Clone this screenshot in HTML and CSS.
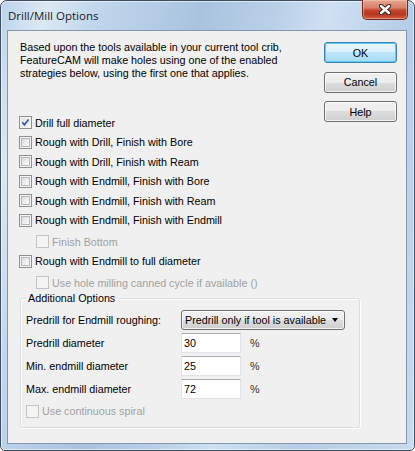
FILE: index.html
```html
<!DOCTYPE html>
<html lang="en">
<head>
    <meta charset="UTF-8">
    <title>Drill/Mill Options</title>
    <link rel="stylesheet" href="styles.css">
</head>
<body>
    <div class="window">
        <div class="titlebar">
            <span class="title">Drill/Mill Options</span>
            <button class="close-btn" title="Close">
                <svg width="12" height="11" viewBox="0 0 12 11">
                    <path d="M2 2 L10 9 M10 2 L2 9" stroke="#3a2a28" stroke-width="4.4" stroke-linecap="round"/>
                    <path d="M2 2 L10 9 M10 2 L2 9" stroke="#ffffff" stroke-width="2.4" stroke-linecap="round"/>
                </svg>
            </button>
        </div>

        <div class="client">
            <div class="main">
                <p class="intro">
                    Based upon the tools available in your current tool crib,<br>
                    FeatureCAM will make holes using one of the enabled<br>
                    strategies below, using the first one that applies.
                </p>

                <div class="options">
                    <label class="row">
                        <span class="cb checked">
                            <svg width="9" height="9" viewBox="0 0 9 9">
                                <path d="M1.3 4.2 L3.4 6.8 L7.6 1.4" fill="none" stroke="#3f5a9c" stroke-width="1.7"/>
                            </svg>
                        </span>
                        Drill full diameter
                    </label>
                    <label class="row"><span class="cb"></span>Rough with Drill, Finish with Bore</label>
                    <label class="row"><span class="cb"></span>Rough with Drill, Finish with Ream</label>
                    <label class="row"><span class="cb"></span>Rough with Endmill, Finish with Bore</label>
                    <label class="row"><span class="cb"></span>Rough with Endmill, Finish with Ream</label>
                    <label class="row"><span class="cb"></span>Rough with Endmill, Finish with Endmill</label>
                    <label class="row sub disabled"><span class="cb"></span>Finish Bottom</label>
                    <label class="row"><span class="cb"></span>Rough with Endmill to full diameter</label>
                    <label class="row sub disabled"><span class="cb"></span>Use hole milling canned cycle if available ()</label>
                </div>

                <fieldset class="group">
                    <legend>Additional Options</legend>

                    <div class="field">
                        <span class="field-label">Predrill for Endmill roughing:</span>
                        <div class="select">
                            <span>Predrill only if tool is available</span>
                            <span class="arrow"></span>
                        </div>
                    </div>
                    <div class="field">
                        <span class="field-label">Predrill diameter</span>
                        <input class="num" type="text" value="30">
                        <span class="unit">%</span>
                    </div>
                    <div class="field">
                        <span class="field-label">Min. endmill diameter</span>
                        <input class="num" type="text" value="25">
                        <span class="unit">%</span>
                    </div>
                    <div class="field">
                        <span class="field-label">Max. endmill diameter</span>
                        <input class="num" type="text" value="72">
                        <span class="unit">%</span>
                    </div>

                    <label class="row spiral disabled"><span class="cb"></span>Use continuous spiral</label>
                </fieldset>
            </div>

            <div class="buttons">
                <button class="btn default">OK</button>
                <button class="btn">Cancel</button>
                <button class="btn">Help</button>
            </div>
        </div>
    </div>
</body>
</html>
```

FILE: styles.css
```css
/* Page */
body {
    margin: 0;
    background: #ffffff;
}

/* Window frame (Aero glass look) */
.window {
    width: 415px;
    height: 451px;
    box-sizing: border-box;
    border: 1px solid #3f4e5f;
    border-radius: 7px 7px 5px 5px;
    padding: 0 7px 6px 6px;
    display: flex;
    flex-direction: column;
    background: linear-gradient(105deg, #bcd3eb 0%, #dbe8f5 9%, #c2d7ed 18%, #a9c3df 38%, #b9d0e8 52%, #cfe0f2 62%, #b6cde6 78%, #c8dbef 100%);
    box-shadow: inset 0 0 0 1px rgba(255, 255, 255, 0.55);
}

/* Title bar */
.titlebar {
    height: 29px;
    display: flex;
    align-items: flex-start;
    padding-left: 1px;
}

.title {
    font-family: "Open Sans", "Noto Sans", sans-serif;
    font-size: 11.5px;
    color: #1a1a1a;
    margin-top: 7px;
}

.close-btn {
    margin: -1px -1px 0 auto;
    width: 46px;
    height: 20px;
    padding: 0;
    border: 1px solid #6e2a22;
    border-top: none;
    border-radius: 0 0 5px 5px;
    background: linear-gradient(#e6a592 0%, #d9806a 40%, #c3432b 55%, #b6361f 75%, #d2613f 100%);
    box-shadow: inset 0 0 0 1px rgba(255, 210, 190, 0.45);
    display: flex;
    align-items: center;
    justify-content: center;
}

/* Client area */
.client {
    flex: 1;
    display: flex;
    border: 1px solid #8396ab;
    background: #f0f0f0;
    font-family: "Liberation Sans", Arial, sans-serif;
    font-size: 10.75px;
    color: #000000;
}

.main {
    flex: 1;
    min-width: 0;
    padding-left: 11px;
}

.intro {
    margin: 10px 0 0 1px;
    line-height: 13px;
    white-space: nowrap;
}

/* Check boxes */
.options {
    margin-top: 33px;
}

.row {
    height: 19.5px;
    display: flex;
    align-items: center;
    white-space: nowrap;
}

.row.sub {
    margin-top: 2px;
    padding-left: 17px;
}

.disabled {
    color: #a0a0a0;
}

.cb {
    width: 13px;
    height: 13px;
    box-sizing: border-box;
    flex: none;
    display: flex;
    padding: 1px;
    margin-right: 3px;
    border: 1px solid #8e8f8f;
    background: #f4f4f4;
}

.cb::before {
    content: "";
    flex: 1;
    border: 1px solid #b5b9bd;
    background: linear-gradient(135deg, #d7dadf 0%, #eceef0 55%, #fbfbfb 100%);
}

.cb.checked::before {
    display: none;
}

.cb.checked svg {
    background: linear-gradient(135deg, #dfe2e6 0%, #f6f6f6 100%);
}

.disabled .cb {
    border-color: #c4c4c4;
}

.disabled .cb::before {
    border-color: #f4f4f4;
    background: #f4f4f4;
}

/* Group box */
.group {
    margin: -1px 0 0 1px;
    width: 340px;
    box-sizing: border-box;
    padding: 5px 0 6px 5px;
    border: 1px solid #d5dfe5;
    border-radius: 3px;
    box-shadow: inset 1px 1px 0 #ffffff, 1px 1px 0 #ffffff;
}

.group legend {
    padding: 0 2px;
    line-height: 13px;
}

.field {
    height: 20px;
    display: flex;
    align-items: center;
    margin-bottom: 3px;
}

.field-label {
    width: 155px;
    flex: none;
}

.select {
    width: 164px;
    height: 20px;
    box-sizing: border-box;
    display: flex;
    align-items: center;
    justify-content: space-between;
    padding: 0 6px 0 3px;
    border: 1px solid #707070;
    border-radius: 3px;
    background: linear-gradient(#f2f2f2 0%, #ebebeb 50%, #dddddd 50%, #cfcfcf 100%);
    box-shadow: inset 0 0 0 1px rgba(255, 255, 255, 0.7);
    white-space: nowrap;
}

.arrow {
    width: 0;
    height: 0;
    border-left: 3.5px solid transparent;
    border-right: 3.5px solid transparent;
    border-top: 4px solid #000000;
}

.num {
    width: 60px;
    height: 20px;
    box-sizing: border-box;
    margin: 0;
    padding: 0 2px;
    border: 1px solid #e2e3ea;
    border-top-color: #abadb3;
    font-family: "Liberation Sans", Arial, sans-serif;
    font-size: 10.75px;
    color: #000000;
    background: #ffffff;
}

.unit {
    margin-left: 9px;
    color: #333333;
}

.row.spiral {
    margin-top: 1px;
    height: 19px;
}

/* Buttons */
.buttons {
    flex: none;
    display: flex;
    flex-direction: column;
    gap: 8.5px;
    padding: 11px 9px 0 0;
}

.btn {
    width: 73px;
    height: 21px;
    padding: 0;
    border: 1px solid #707070;
    border-radius: 3px;
    background: linear-gradient(#f2f2f2 0%, #ebebeb 50%, #dddddd 50%, #cfcfcf 100%);
    box-shadow: inset 0 0 0 1px rgba(255, 255, 255, 0.75);
    font-family: "Liberation Sans", Arial, sans-serif;
    font-size: 10.75px;
    color: #000000;
}

.btn.default {
    border-color: #3c7fb1;
    background: linear-gradient(#eaf6fd 0%, #d9f0fc 50%, #bee6fd 50%, #a7d9f5 100%);
    box-shadow: inset 0 0 0 1px #60cdf6;
}
```
